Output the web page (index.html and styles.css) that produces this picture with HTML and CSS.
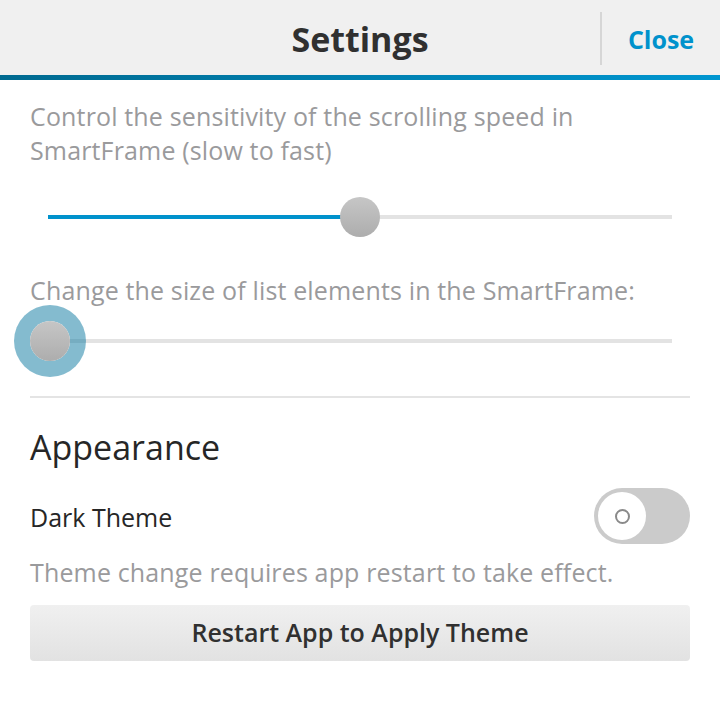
FILE: index.html
```html
<!DOCTYPE html>
<html lang="en">
<head>
<meta charset="utf-8">
<title>Settings</title>
<link rel="stylesheet" href="styles.css">
</head>
<body>
<header class="titlebar">
  <div class="titlebar-spacer"></div>
  <h1 class="titlebar-title">Settings</h1>
  <div class="titlebar-action"><span class="close">Close</span></div>
</header>
<div class="accent-bar"></div>
<main class="content">
  <p class="hint hint-first">Control the sensitivity of the scrolling speed in SmartFrame (slow to fast)</p>
  <div class="slider slider-speed">
    <div class="track"><div class="fill" style="width:50%"></div></div>
    <div class="thumb" style="left:310px"></div>
  </div>
  <p class="hint hint-size">Change the size of list elements in the SmartFrame:</p>
  <div class="slider slider-size">
    <div class="track"></div>
    <div class="thumb active" style="left:0px"></div>
  </div>
  <hr class="divider">
  <h2 class="section-title">Appearance</h2>
  <div class="toggle-row">
    <span class="toggle-label">Dark Theme</span>
    <div class="toggle"><div class="knob"><span class="ring"></span></div></div>
  </div>
  <p class="hint hint-theme">Theme change requires app restart to take effect.</p>
  <button class="btn">Restart App to Apply Theme</button>
</main>
</body>
</html>
```

FILE: styles.css
```css
* { box-sizing: border-box; }
html, body { margin: 0; padding: 0; background: #ffffff; }
body { font-family: "Open Sans", Lato, sans-serif; color: #262626; width: 720px; height: 720px; overflow: hidden; }

.titlebar {
  height: 75px;
  background: #f0f0f0;
  display: grid;
  grid-template-columns: 120px 1fr 120px;
  align-items: center;
}
.titlebar-title {
  margin: 0;
  padding-top: 2px;
  text-align: center;
  font-size: 34px;
  font-weight: 700;
  color: #303030;
}
.titlebar-action {
  align-self: stretch;
  margin: 12px 0 10px;
  border-left: 2px solid #d6d6d6;
  display: flex;
  align-items: center;
  justify-content: center;
}
.close { color: #0092cc; font-size: 25px; font-weight: 700; }
.accent-bar { height: 5px; background: linear-gradient(to right, #006a90, #0096d0); }

.content { padding: 0 30px; }
.hint {
  margin: 0;
  font-size: 25px;
  line-height: 34px;
  color: #9a9a9c;
  letter-spacing: 0.15px;
}
.hint-first { margin-top: 19px; }
.hint-size { margin-top: 0; }

.slider { position: relative; height: 40px; display: flex; align-items: center; }
.slider-speed { margin: 30px 0 36px; }
.slider-size { margin: 14px 0 0; }
.track { flex: 1; height: 4px; margin: 0 18px; background: #e3e3e3; }
.slider-size .track { margin-left: 20px; }
.fill { height: 100%; background: #0092cc; }
.thumb {
  position: absolute;
  top: 0;
  width: 40px; height: 40px;
  border-radius: 50%;
  background: linear-gradient(#c6c6c6, #adadad);
}
.thumb.active { box-shadow: 0 0 0 16px rgba(10, 120, 160, 0.5); }

.divider { margin: 35px 0 0; border: 0; height: 2px; background: #e4e4e4; }

.section-title { margin: 29px 0 0; font-size: 34px; font-weight: 400; line-height: 40px; color: #262626; }

.toggle-row { margin-top: 21px; height: 56px; display: flex; align-items: center; justify-content: space-between; }
.toggle-label { font-size: 25px; color: #262626; padding-top: 1px; }
.toggle { width: 96px; height: 56px; border-radius: 28px; background: #cbcbcb; padding: 4px; }
.knob { width: 48px; height: 48px; border-radius: 50%; background: #ffffff; display: flex; align-items: center; justify-content: center; }
.ring { width: 15px; height: 15px; border-radius: 50%; border: 2px solid #8a8a8a; }

.hint-theme { margin-top: 11px; }
.btn {
  display: block;
  width: 100%;
  margin-top: 16px;
  height: 56px;
  padding-bottom: 3px;
  border: 0;
  border-radius: 4px;
  background: linear-gradient(#f0f0f0, #e2e2e2);
  font-family: "Open Sans", Lato, sans-serif;
  font-size: 25px;
  font-weight: 600;
  color: #303030;
}
```
